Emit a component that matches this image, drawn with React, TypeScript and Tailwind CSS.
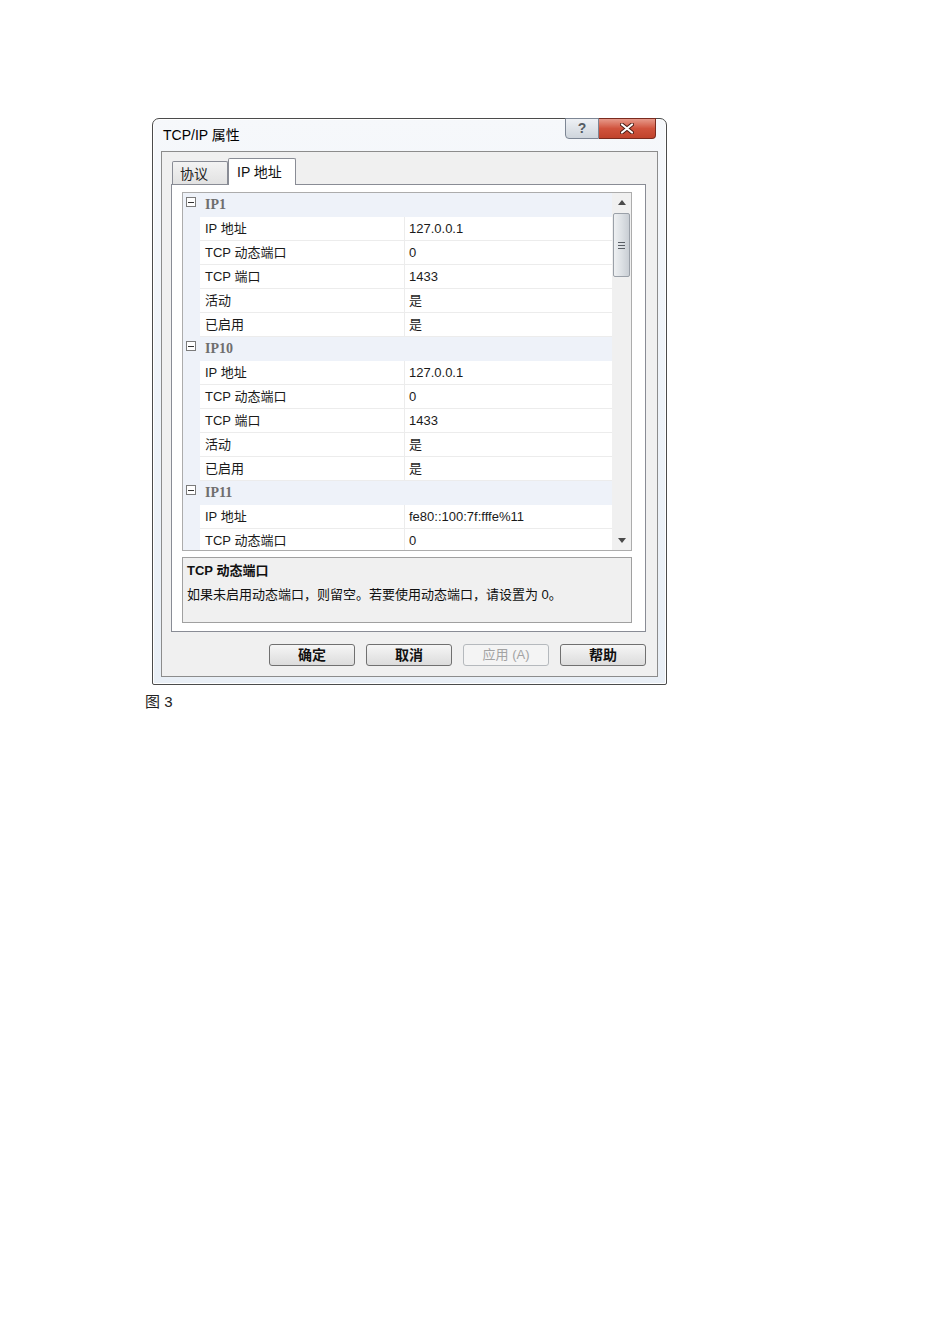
import React from "react";

const font = { fontFamily: '"Liberation Sans", "Noto Sans CJK SC", sans-serif' };

type Group = { name: string; rows: [string, string][] };

const groups: Group[] = [
  {
    name: "IP1",
    rows: [
      ["IP 地址", "127.0.0.1"],
      ["TCP 动态端口", "0"],
      ["TCP 端口", "1433"],
      ["活动", "是"],
      ["已启用", "是"],
    ],
  },
  {
    name: "IP10",
    rows: [
      ["IP 地址", "127.0.0.1"],
      ["TCP 动态端口", "0"],
      ["TCP 端口", "1433"],
      ["活动", "是"],
      ["已启用", "是"],
    ],
  },
  {
    name: "IP11",
    rows: [
      ["IP 地址", "fe80::100:7f:fffe%11"],
      ["TCP 动态端口", "0"],
    ],
  },
];

const MinusBox = () => (
  <div className="w-[10px] h-[10px] border border-[#7b7b7b] bg-white flex items-center justify-center">
    <div className="w-[6px] h-px bg-[#333]" />
  </div>
);

const Arrow = ({ down }: { down?: boolean }) => (
  <svg width="8" height="5" viewBox="0 0 8 5">
    <path d={down ? "M0 0 H8 L4 5 Z" : "M0 5 H8 L4 0 Z"} fill="#4a4a4a" />
  </svg>
);

const Scrollbar = () => (
  <div className="w-[19px] shrink-0 bg-[#f0f0f0] flex flex-col items-center">
    <div className="h-[19px] w-full flex items-center justify-center">
      <Arrow />
    </div>
    <div className="mt-[1px] w-[17px] h-[64px] rounded-[2px] border border-[#9aa0a8] bg-gradient-to-r from-[#eef0f2] via-[#dde1e5] to-[#c9ced4] flex flex-col items-center justify-center gap-[2px]">
      <div className="w-[7px] h-px bg-[#5a5f66]" />
      <div className="w-[7px] h-px bg-[#5a5f66]" />
      <div className="w-[7px] h-px bg-[#5a5f66]" />
    </div>
    <div className="flex-1" />
    <div className="h-[20px] w-full flex items-center justify-center">
      <Arrow down />
    </div>
  </div>
);

const PropertyGrid = () => (
  <div className="h-[359px] border border-[#acacac] flex overflow-hidden bg-white">
    <div className="flex-1 flex flex-col overflow-hidden text-[13px]">
      {groups.map((g) => (
        <div key={g.name} className="flex flex-col">
          <div className="h-[24px] shrink-0 flex items-start bg-[#eef2f9]">
            <div className="pl-[3px] pt-[4px]">
              <MinusBox />
            </div>
            <div
              className="pl-[9px] leading-[24px] text-[14px] font-bold text-[#6e6e6e]"
              style={{ fontFamily: '"Liberation Serif", "Noto Sans CJK SC", serif' }}
            >
              {g.name}
            </div>
          </div>
          {g.rows.map(([k, v], i) => (
            <div key={i} className="h-[24px] shrink-0 flex">
              <div className="w-[17px] shrink-0 bg-[#eef2f9]" />
              <div className="w-[205px] shrink-0 pl-[5px] leading-[23px] border-b border-r border-[#ececec] text-[#1a1a1a]">
                {k}
              </div>
              <div className="flex-1 pl-[4px] leading-[23px] border-b border-[#ececec] text-[#1a1a1a]">{v}</div>
            </div>
          ))}
        </div>
      ))}
    </div>
    <Scrollbar />
  </div>
);

const DialogButton = ({ label, disabled }: { label: string; disabled?: boolean }) => (
  <div
    className={
      disabled
        ? "w-[86px] h-[22px] rounded-[3px] border border-[#b5b9bd] bg-[#f4f4f4] flex items-center justify-center text-[13px] text-[#a3a3a3]"
        : "w-[86px] h-[22px] rounded-[3px] border border-[#707070] bg-gradient-to-b from-[#f6f6f6] to-[#dcdcdc] flex items-center justify-center text-[14px] font-bold text-[#111]"
    }
  >
    {label}
  </div>
);

export default function App() {
  return (
    <div className="min-h-[1344px] bg-white pt-[118px] pl-[145px]" style={font}>
      <div className="ml-[7px] w-[515px] h-[567px] flex flex-col border border-[#4b4b4b] rounded-t-[7px] rounded-b-[2px] bg-gradient-to-b from-[#f6f8fb] via-[#eef3f9] to-[#e9eff6] shadow-[inset_0_0_0_1px_#ffffff]">
        <div className="h-[32px] flex justify-between">
          <div className="pl-[10px] pt-[6px] text-[14px] text-black">TCP/IP 属性</div>
          <div className="flex mr-[10px] -mt-px">
            <div className="w-[34px] h-[21px] border border-[#7d8694] rounded-bl-[4px] bg-gradient-to-b from-[#eef1f5] to-[#cfd5dc] flex items-center justify-center text-[14px] font-bold text-[#555b63]">
              ?
            </div>
            <div className="w-[57px] h-[21px] border border-l-0 border-[#7a2a1e] rounded-br-[4px] bg-gradient-to-b from-[#e6998a] via-[#d0533d] to-[#c0432c] flex items-center justify-center">
              <svg width="14" height="11" viewBox="0 0 14 11">
                <path d="M2 1.5 L12 9.5 M12 1.5 L2 9.5" stroke="#4a1a12" strokeWidth="4" strokeLinecap="round" />
                <path d="M2 1.5 L12 9.5 M12 1.5 L2 9.5" stroke="#ffffff" strokeWidth="2.2" strokeLinecap="round" />
              </svg>
            </div>
          </div>
        </div>

        <div className="mx-[8px] h-[526px] border border-[#8c8c8c] bg-[#f0f0f0] flex flex-col">
          <div className="flex items-end pl-[10px] pt-[6px] relative z-10">
            <div className="w-[56px] h-[23px] border border-b-0 border-[#898c95] rounded-t-[2px] bg-gradient-to-b from-[#f3f3f3] to-[#e2e2e2] pl-[7px] text-[14px] leading-[24px] text-[#222]">
              协议
            </div>
            <div className="w-[68px] h-[27px] -mb-px border border-b-0 border-[#898c95] rounded-t-[2px] bg-white pl-[8px] text-[14px] leading-[26px] text-[#111]">
              IP 地址
            </div>
          </div>

          <div className="ml-[9px] mr-[11px] h-[448px] border border-[#898c95] bg-white px-[10px] pr-[13px] pt-[7px] flex flex-col">
            <PropertyGrid />
            <div className="mt-[6px] h-[66px] border border-[#a0a0a0] bg-[#f0f0f0] pl-[4px] pt-[1px] text-[13px] text-[#111]">
              <div className="leading-[24px] font-bold">TCP 动态端口</div>
              <div className="leading-[24px]">如果未启用动态端口，则留空。若要使用动态端口，请设置为 0。</div>
            </div>
          </div>

          <div className="mt-[12px] mr-[11px] flex justify-end gap-[11px]">
            <DialogButton label="确定" />
            <DialogButton label="取消" />
            <DialogButton label="应用 (A)" disabled />
            <DialogButton label="帮助" />
          </div>
        </div>
      </div>
      <div className="mt-[6px] text-[15px] text-[#222]">图 3</div>
    </div>
  );
}
